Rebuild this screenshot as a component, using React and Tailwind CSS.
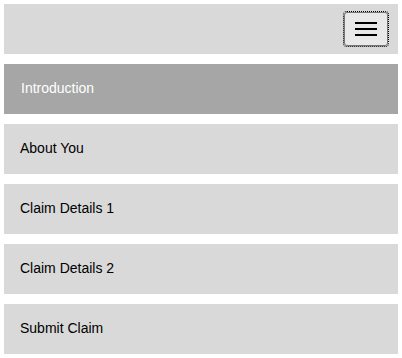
export default function App() {
  const items = ["Introduction", "About You", "Claim Details 1", "Claim Details 2", "Submit Claim"];
  return (
    <div className="p-1 flex flex-col gap-[10px] bg-white" style={{ fontFamily: '"Liberation Sans", Arial, sans-serif' }}>
      <div className="h-[50px] bg-[#d9d9d9] flex items-center justify-end pr-[10px]">
        <button className="w-[44px] h-[34px] rounded-[3px] border border-[#767676] bg-[#e9e9e9] outline-1 outline-dotted outline-black outline-offset-0 flex flex-col items-center justify-center gap-[4px]">
          <span className="block w-[22px] h-[2px] bg-black" />
          <span className="block w-[22px] h-[2px] bg-black" />
          <span className="block w-[22px] h-[2px] bg-black" />
        </button>
      </div>
      {items.map((t, i) => (
        <div
          key={t}
          className={
            i === 0
              ? "h-[50px] bg-[#a6a6a6] text-white flex items-center pl-[17px] pb-[2px] text-[14px]"
              : "h-[50px] bg-[#d9d9d9] text-black flex items-center pl-4 pb-[2px] text-[14px]"
          }
        >
          {t}
        </div>
      ))}
    </div>
  );
}
